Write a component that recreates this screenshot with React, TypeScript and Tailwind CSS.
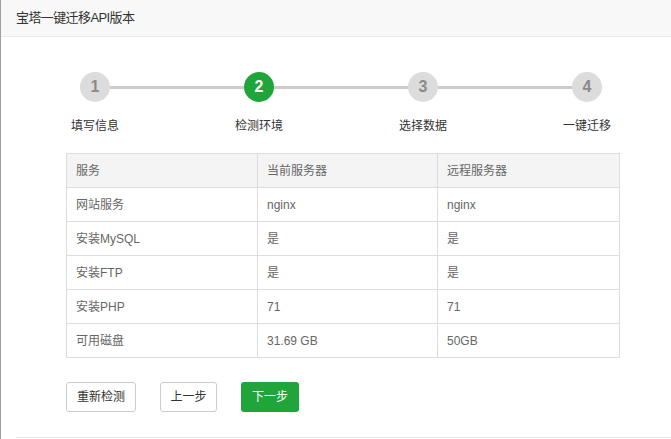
import React from "react";

const steps = [
  { n: 1, label: "填写信息", active: false },
  { n: 2, label: "检测环境", active: true },
  { n: 3, label: "选择数据", active: false },
  { n: 4, label: "一键迁移", active: false },
];

const rows = [
  ["网站服务", "nginx", "nginx"],
  ["安装MySQL", "是", "是"],
  ["安装FTP", "是", "是"],
  ["安装PHP", "71", "71"],
  ["可用磁盘", "31.69 GB", "50GB"],
];

const font = {
  fontFamily: '"Liberation Sans", "Noto Sans CJK SC", sans-serif',
};

export default function App() {
  return (
    <div
      className="w-[671px] h-[439px] bg-white flex overflow-hidden"
      style={font}
    >
      <div className="w-[1px] h-full bg-[#a0a0a0] shrink-0" />
      <div className="flex-1 flex flex-col">
        <div className="h-[37px] bg-[#f8f8f8] border-b border-[#e9e9e9] flex items-center pl-[15px] text-[13px] tracking-[-0.6px] text-[#333]">
          宝塔一键迁移API版本
        </div>

        {/* steps */}
        <div className="flex items-center pl-[79px] mt-[35px]">
          {steps.map((s, i) => (
            <React.Fragment key={s.n}>
              <div className="relative w-[30px] h-[30px] shrink-0">
                <div
                  className={`w-[30px] h-[30px] rounded-full flex items-center justify-center text-[16px] font-bold ${
                    s.active
                      ? "bg-[#20a53a] text-white"
                      : "bg-[#dcdcdc] text-[#8a8a8a]"
                  }`}
                >
                  {s.n}
                </div>
                <div className="absolute top-[47px] left-1/2 -translate-x-1/2 whitespace-nowrap text-[12px] leading-[14px] text-[#333]">
                  {s.label}
                </div>
              </div>
              {i < steps.length - 1 && (
                <div className="w-[134px] h-[3px] bg-[#cccccc]" />
              )}
            </React.Fragment>
          ))}
        </div>

        {/* table */}
        <div className="ml-[65px] mt-[51px]">
          <table className="border-collapse text-[12px] text-[#666]">
            <thead>
              <tr className="bg-[#f4f4f4]">
                <th className="w-[191px] h-[34px] border border-[#ddd] pl-[9px] text-left font-normal">
                  服务
                </th>
                <th className="w-[180px] h-[34px] border border-[#ddd] pl-[9px] text-left font-normal">
                  当前服务器
                </th>
                <th className="w-[182px] h-[34px] border border-[#ddd] pl-[9px] text-left font-normal">
                  远程服务器
                </th>
              </tr>
            </thead>
            <tbody>
              {rows.map((r) => (
                <tr key={r[0]}>
                  {r.map((c, j) => (
                    <td
                      key={j}
                      className="h-[34px] border border-[#ddd] pl-[9px]"
                    >
                      {c}
                    </td>
                  ))}
                </tr>
              ))}
            </tbody>
          </table>
        </div>

        {/* buttons */}
        <div className="flex ml-[65px] mt-[24px] gap-[25px] text-[12px]">
          <button className="h-[30px] w-[70px] border border-[#ccc] rounded-[3px] bg-white text-[#333]">
            重新检测
          </button>
          <button className="h-[30px] w-[57px] border border-[#ccc] rounded-[3px] bg-white text-[#333] -ml-[1px]">
            上一步
          </button>
          <button className="h-[30px] w-[58px] rounded-[3px] bg-[#20a53a] text-white -ml-[1px]">
            下一步
          </button>
        </div>

        <div className="mt-auto ml-[15px] h-[1px] bg-[#e5e5e5] mb-[1px]" />
      </div>
    </div>
  );
}
